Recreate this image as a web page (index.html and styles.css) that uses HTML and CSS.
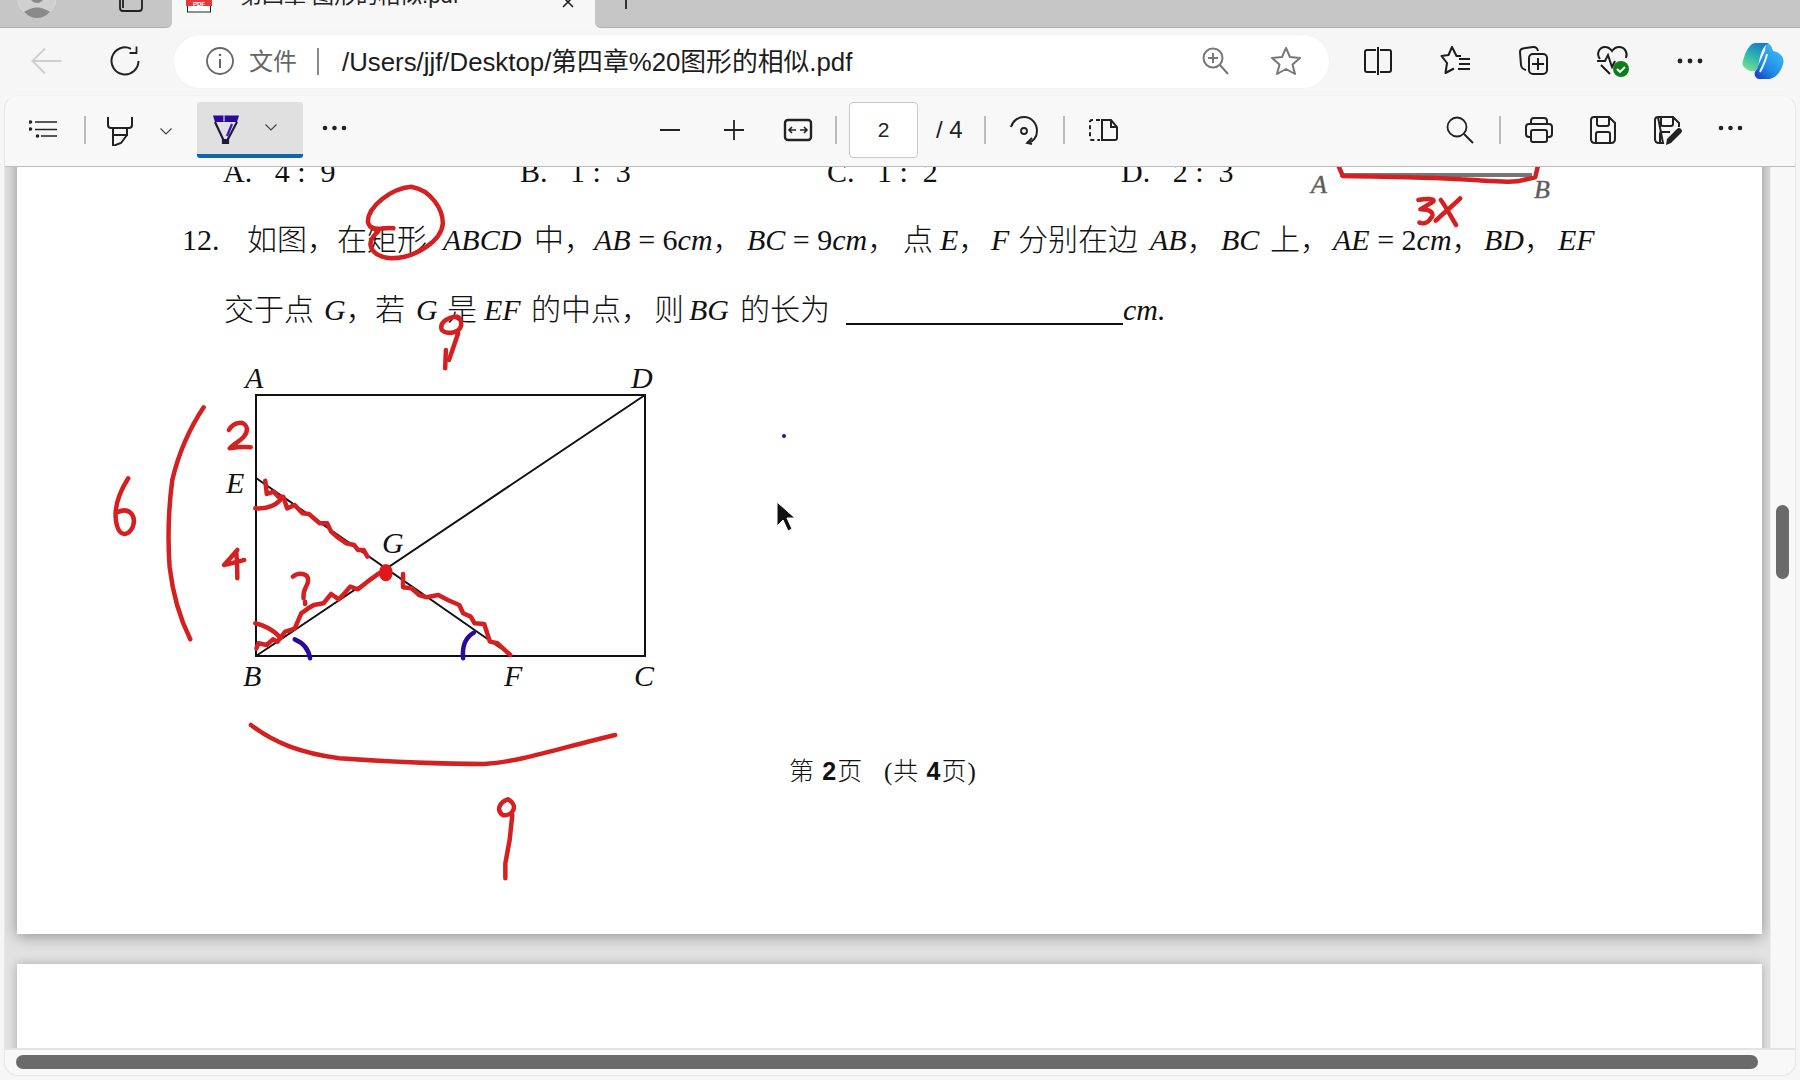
FILE: index.html
```html
<!DOCTYPE html>
<html lang="zh">
<head>
<meta charset="utf-8">
<title>第四章 图形的相似.pdf</title>
<link rel="stylesheet" href="styles.css">
</head>
<body>
<header class="tabbar">
  <div class="strip strip-left">
    <svg class="ico-avatar" width="44" height="22" viewBox="0 0 44 22"><circle cx="22" cy="-2" r="19" fill="#d0d0d0" stroke="#dcdcdc"/><circle cx="22" cy="-4" r="7" fill="#8a8a8a"/><path d="M9 12q13-9 26 0q-6 6-13 6t-13-6z" fill="#8a8a8a"/></svg>
    <svg class="ico-ws" width="24" height="12" viewBox="0 0 24 12"><path d="M1 0v8q0 3 3 3h16q3 0 3-3V0M4 0v8" fill="none" stroke="#222" stroke-width="1.8"/></svg>
  </div>
  <div class="tab">
    <svg class="ico-pdf" width="28" height="13" viewBox="0 0 28 13"><rect x="2.500" y="5" width="23" height="7" fill="#fff" stroke="#222"/><rect x="1" y="-1" width="26" height="7" fill="#e5383b"/><text x="14" y="5.600" class="pdf-mark">PDF</text></svg>
    <span class="tab-title">第四章 图形的相似.pdf</span>
    <svg class="ico-close" width="16" height="8" viewBox="0 0 16 8"><path d="M3-3L13 7M13-3L3 7" stroke="#222" stroke-width="1.6" fill="none"/></svg>
  </div>
  <div class="strip strip-right">
    <span class="new-tab"></span>
  </div>
</header>

<nav class="navbar">
  <span class="btn"><svg width="32" height="32" viewBox="0 0 32 32"><path d="M30.500 16H2M14 3.500L1.500 16L14 28.500" fill="none" stroke="#cfcfcf" stroke-width="2"/></svg></span>
  <span class="btn btn-reload"><svg width="32" height="32" viewBox="0 0 32 32"><path d="M22 3.800A13.500 13.500 0 1 0 29.500 16" fill="none" stroke="#222" stroke-width="2"/><path d="M27.500 1.500V8H20.500" fill="none" stroke="#222" stroke-width="1.800"/></svg></span>
  <div class="address">
    <svg class="ico-info" width="30" height="30" viewBox="0 0 30 30"><circle cx="15" cy="15" r="13" fill="none" stroke="#666" stroke-width="1.800"/><path d="M15 13v9" stroke="#666" stroke-width="2"/><circle cx="15" cy="9" r="1.300" fill="#666"/></svg>
    <span class="scheme">文件</span>
    <span class="addr-sep"></span>
    <span class="url">/Users/jjf/Desktop/第四章%20图形的相似.pdf</span>
    <svg class="ico-zoom" width="32" height="32" viewBox="0 0 32 32"><circle cx="14" cy="13" r="9.500" fill="none" stroke="#777" stroke-width="2"/><path d="M14 8v10M9 13h10M21 20l8 9" stroke="#777" stroke-width="2" fill="none"/></svg>
    <svg class="ico-star" width="32" height="32" viewBox="0 0 32 32"><path d="M16 3l4 9 10 1-7.500 6.500L25 29l-9-5-9 5 2.500-9.500L2 13l10-1z" fill="none" stroke="#777" stroke-width="2" stroke-linejoin="round"/></svg>
  </div>
  <div class="nav-actions">
    <span class="btn"><svg width="32" height="32" viewBox="0 0 32 32"><path d="M14 5H5q-2 0-2 2v18q0 2 2 2h9M18 5h9q2 0 2 2v18q0 2-2 2h-9" fill="none" stroke="#1c1c1c" stroke-width="2"/><path d="M16 2v28" stroke="#1c1c1c" stroke-width="2"/></svg></span>
    <span class="btn"><svg width="32" height="32" viewBox="0 0 32 32"><path d="M21 11H16.500L12 2L8.500 10L1.500 11L7 18L5.500 28L14 23.500" fill="none" stroke="#1c1c1c" stroke-width="2" stroke-linejoin="round"/><path d="M19 14h11M19 19h11M18 24h12" stroke="#1c1c1c" stroke-width="2"/></svg></span>
    <span class="btn"><svg width="32" height="32" viewBox="0 0 32 32"><path d="M8 25Q3.500 24 3 20L2 7q0-3 3-3.500L15 2q4-.5 5 4" fill="none" stroke="#1c1c1c" stroke-width="2"/><rect x="11" y="9" width="18" height="20" rx="4" fill="none" stroke="#1c1c1c" stroke-width="2"/><path d="M20 13v12M14 19h12" stroke="#1c1c1c" stroke-width="2"/></svg></span>
    <span class="btn"><svg width="36" height="36" viewBox="0 0 36 36"><path d="M6 16C2 11 5 4 11 4q4 0 7 4q3-4 7-4c6 0 9 6 7 11M3 18h8l3-6 4 12 3-6M7 22l9 9" fill="none" stroke="#1c1c1c" stroke-width="2"/><circle cx="27" cy="26" r="8" fill="#107c1e"/><path d="M23 26l3 3 5-5" fill="none" stroke="#fff" stroke-width="1.800"/></svg></span>
    <span class="btn"><svg class="dots" width="26" height="6" viewBox="0 0 26 6"><circle cx="3" cy="3" r="2.400"/><circle cx="13" cy="3" r="2.400"/><circle cx="23" cy="3" r="2.400"/></svg></span>
    <span class="btn btn-copilot"><svg width="42" height="38" viewBox="0 0 42 38"><defs><linearGradient id="cpa" x1="0.700" y1="0" x2="0.200" y2="1"><stop offset="0" stop-color="#1b78c8"/><stop offset="0.500" stop-color="#2bb8b0"/><stop offset="1" stop-color="#7fe08a"/></linearGradient><linearGradient id="cpb" x1="0.800" y1="0.200" x2="0.200" y2="1"><stop offset="0" stop-color="#35b8f2"/><stop offset="0.600" stop-color="#1f8be8"/><stop offset="1" stop-color="#1c46c8"/></linearGradient></defs><path d="M24 1C28 1 30 5 31 9C37 10 42 14 41.500 20C40 28 35 36 27 37H17C13 36 11 32 14 28L23 9Z" fill="url(#cpb)"/><path d="M13 1H27C22 3 20 8 18 15L16 25C15 30 10 30 6 28C2 26 0 23 .5 21C2 14 6 2 13 1Z" fill="url(#cpa)"/><path d="M25 12C24 18 21 24 18 30" fill="none" stroke="#e8f4fb" stroke-width="2"/></svg></span>
  </div>
</nav>

<main class="panel">
  <div class="pdf-toolbar">
    <span class="btn tb-first"><svg width="32" height="32" viewBox="0 0 32 32"><path d="M6 8H28M6 15.500H28M12 22H28" stroke="#222" stroke-width="1.500"/><circle cx="1.500" cy="8" r="1.800" fill="#222"/><circle cx="1.500" cy="15" r="1.800" fill="#222"/><circle cx="8.500" cy="22" r="1.800" fill="#222"/></svg></span>
    <span class="sep sep-list"></span>
    <span class="btn btn-hl"><svg width="32" height="32" viewBox="0 0 32 32"><path d="M4 3v8q0 3 3 3h18q3 0 3-3V3M9 14v7h14v-7M9 21v11l8-3 6-8" fill="none" stroke="#222" stroke-width="2"/></svg></span>
    <span class="chev-box"><svg class="chev" width="12" height="7" viewBox="0 0 12 7"><path d="M.5.5L6 6 11.500.5"/></svg></span>
    <span class="pen-active">
      <svg width="32" height="32" viewBox="0 0 32 32"><path d="M3 3.500H29L27 10H5z" fill="#2a0a9a"/><path d="M14 3.500v6" stroke="#fff" stroke-width="1"/><path d="M5 10L13 27V32H18V27L27 10" fill="none" stroke="#1f1a3a" stroke-width="2.200"/><path d="M13 27h5v5h-5z" fill="#1f1a3a"/><path d="M22 12L17 24" stroke="#3d14c0" stroke-width="2.200"/></svg>
      <svg class="chev chev-pen" width="12" height="7" viewBox="0 0 12 7"><path d="M.5.5L6 6 11.500.5"/></svg>
    </span>
    <span class="btn btn-more"><svg class="dots" width="26" height="6" viewBox="0 0 26 6"><circle cx="3" cy="3" r="2.300"/><circle cx="12.500" cy="3" r="2.300"/><circle cx="22" cy="3" r="2.300"/></svg></span>

    <span class="tb-group tb-zoom">
      <span class="btn"><svg width="32" height="32" viewBox="0 0 32 32"><path d="M6 16H26" stroke="#222" stroke-width="2.200"/></svg></span>
      <span class="btn"><svg width="32" height="32" viewBox="0 0 32 32"><path d="M6 16H26M16 6V26" stroke="#222" stroke-width="1.800"/></svg></span>
      <span class="btn"><svg width="32" height="32" viewBox="0 0 32 32"><rect x="3" y="6" width="26" height="20" rx="3" fill="none" stroke="#222" stroke-width="2.400"/><path d="M7 16h7M18 16h7M10 13l-3 3 3 3M22 13l3 3-3 3" fill="none" stroke="#222" stroke-width="1.600"/></svg></span>
    </span>
    <span class="sep sep-a"></span>
    <span class="page-input">2</span>
    <span class="page-total">/ 4</span>
    <span class="sep sep-b"></span>
    <span class="btn btn-rot"><svg width="32" height="32" viewBox="0 0 32 32"><path d="M3 13C5 6 11 3 16 3c8 0 13 7 13 14 0 6-4 11-9 12" fill="none" stroke="#222" stroke-width="2"/><path d="M24 24l-5 5 5 1" fill="none" stroke="#222" stroke-width="1.800"/><circle cx="16" cy="17" r="3" fill="none" stroke="#222" stroke-width="1.800"/></svg></span>
    <span class="sep sep-c"></span>
    <span class="btn btn-two"><svg width="32" height="32" viewBox="0 0 32 32"><path d="M13 6H5Q3 6 3 8V24Q3 26 5 26H13" fill="none" stroke="#222" stroke-width="2" stroke-dasharray="4 3"/><path d="M15 6H24L30 13V24Q30 26 28 26H15zM24 6V13H30" fill="none" stroke="#222" stroke-width="2"/></svg></span>

    <span class="btn btn-search"><svg width="32" height="32" viewBox="0 0 32 32"><circle cx="13" cy="13" r="9.500" fill="none" stroke="#222" stroke-width="1.800"/><path d="M20 20l9 9" stroke="#222" stroke-width="2"/></svg></span>
    <span class="sep sep-d"></span>
    <span class="tb-group tb-file">
      <span class="btn"><svg width="32" height="32" viewBox="0 0 32 32"><path d="M8 10V7q0-3 3-3h10q3 0 3 3v3M8 23H6q-3 0-3-3v-7q0-3 3-3h20q3 0 3 3v7q0 3-3 3h-2" fill="none" stroke="#222" stroke-width="2"/><rect x="8" y="16" width="16" height="12" rx="2" fill="none" stroke="#222" stroke-width="2"/></svg></span>
      <span class="btn"><svg width="32" height="32" viewBox="0 0 32 32"><path d="M7 3H22L28 9V25Q28 29 24 29H8Q4 29 4 25V6Q4 3 7 3ZM10 3V10Q10 12 12 12H20Q22 12 22 10V3M9 29V20Q9 18 11 18H21Q23 18 23 20V29" fill="none" stroke="#222" stroke-width="2"/></svg></span>
      <span class="btn"><svg width="32" height="32" viewBox="0 0 32 32"><path d="M7 3H22L28 9V13M12 29H8Q4 29 4 25V6Q4 3 7 3ZM10 3V10Q10 12 12 12H20Q22 12 22 10V3M9 29V20Q9 18 11 18H19" fill="none" stroke="#222" stroke-width="2"/><path d="M15 31l1-6L26 15q2-2 4 0t0 4L20 29z" fill="#222"/></svg></span>
      <span class="btn"><svg class="dots" width="26" height="6" viewBox="0 0 26 6"><circle cx="3" cy="3" r="2.300"/><circle cx="12.500" cy="3" r="2.300"/><circle cx="22" cy="3" r="2.300"/></svg></span>
    </span>
  </div>

  <div class="content">
    <div class="viewport">
      <article class="sheet">
        <p class="line options"><span class="opt opt-a">A.&ensp;&nbsp;4&nbsp;:&ensp;9</span><span class="opt opt-b">B.&ensp;&nbsp;1&nbsp;:&ensp;3</span><span class="opt opt-c">C.&ensp;&nbsp;1&nbsp;:&ensp;2</span><span class="opt">D.&ensp;&nbsp;2&nbsp;:&ensp;3</span></p>
        <p class="line q1"><span>12.</span><span>如图，在矩形</span><i>ABCD</i><span>中，</span><span><i>AB</i> = 6<i>cm</i>，</span><span><i>BC</i> = 9<i>cm</i>，</span><span>点</span><span><i>E</i>，</span><i>F</i><span>分别在边</span><span><i>AB</i>，</span><i>BC</i><span>上，</span><span><i>AE</i> = 2<i>cm</i>，</span><span><i>BD</i>，</span><i>EF</i></p>
        <p class="line q2"><span>交于点</span><span><i>G</i>，</span><span>若</span><i>G</i><span>是</span><i>EF</i><span>的中点，</span><span>则</span><i>BG</i><span>的长为</span><span class="blank"></span><i>cm.</i></p>
        <svg class="figure" width="450" height="340" viewBox="220 360 450 340">
          <path class="fig-line" d="M256 395H645V656H256ZM256 656L645 395M256 478L512 656"/>
          <text class="fig-label" x="245" y="388">A</text>
          <text class="fig-label" x="631" y="388">D</text>
          <text class="fig-label" x="226" y="493">E</text>
          <text class="fig-label" x="382" y="553">G</text>
          <text class="fig-label" x="243" y="686">B</text>
          <text class="fig-label" x="504" y="686">F</text>
          <text class="fig-label" x="634" y="686">C</text>
        </svg>
        <p class="foot">第 <b>2</b>页&ensp;&nbsp;(共 <b>4</b>页)</p>
        <svg class="ink" viewBox="17 137 1745 797" width="1745" height="797">
          <text class="frag-label" x="1311" y="193">A</text>
          <text class="frag-label" x="1534" y="198">B</text>
          <path d="M1340 175H1532" stroke="#777" stroke-width="4"/>
          <g transform="translate(900 150) scale(.5102 .3333)" class="red">
            <path d="M860 50L868 78C950 80 1050 82 1100 88C1150 92 1180 98 1210 94L1245 82L1250 50"/>
            <path d="M1016 150C1030 145 1050 145 1045 155L1020 178C1040 178 1050 190 1040 205C1035 220 1025 222 1018 218"/>
            <path d="M1060 150C1070 170 1080 200 1090 225M1098 145C1085 165 1065 190 1050 212"/>
          </g>
          <g transform="translate(100 160) scale(.5102 .3333)" class="red">
            <path d="M575 205C555 200 530 220 525 185C525 140 570 85 610 80C650 90 672 150 672 190C670 240 620 295 570 295C535 290 515 255 545 215"/>
            <path d="M700 470C680 470 665 490 670 510C680 525 705 520 708 495C708 480 705 472 700 470M702 520L684 600"/>
          </g>
          <g transform="translate(90 350) scale(.3827 .3333)" class="red">
            <path d="M930 0L928 55"/>
            <path d="M363 240C375 215 405 210 410 235C412 265 375 280 365 295C380 292 400 290 420 292"/>
            <path d="M100 385C75 430 60 480 70 525C78 560 100 560 112 530C122 495 100 470 72 487"/>
            <path d="M297 172Q240 270 215 390Q200 520 208 650Q220 770 262 868"/>
            <path d="M385 600C370 620 355 640 350 645C370 640 390 635 403 630M382 605C385 640 385 660 385 685"/>
            <path d="M530 680C545 665 570 670 570 690C570 710 555 715 558 745M562 755V762"/>
            <path d="M458 392L462 432L480 425L492 440L505 440L515 475L535 465L555 490L572 492L585 505L600 520L620 520L630 545L645 560L670 580L690 585L700 600L715 600L725 620"/>
            <path d="M432 475Q475 478 497 450"/>
            <path d="M818 672L818 712L840 715L860 735L880 742L910 735L935 750L965 765L975 790L995 800L1005 820L1030 822L1045 875L1065 880L1098 915"/>
            <path d="M435 895L440 880L462 885L478 868L490 875L510 845L525 840L535 835L552 790L570 775L585 765L610 760L630 732L650 748L665 730L680 710L700 718L725 695L755 670"/>
            <path d="M432 820Q470 830 495 860"/>
            <ellipse cx="773" cy="668" rx="18" ry="26" class="red-fill"/>
          </g>
          <g transform="translate(90 350) scale(.3827 .3333)" class="blue">
            <path d="M535 868Q570 885 575 925"/>
            <path d="M1003 848Q970 870 975 925"/>
          </g>
          <g transform="translate(200 690) scale(.5357 .3333)" class="red">
            <path d="M95 105C140 160 190 190 260 205C350 215 450 222 530 222C600 215 680 170 775 135"/>
            <path d="M575 328C560 335 552 360 565 375C585 380 595 345 575 328M583 375L578 450L570 520L570 565"/>
          </g>
          <circle cx="784" cy="436" r="2" fill="#2a0a9a"/>
          <path class="cursor" d="M777 502V526L783 520L788 531L792 529L787 518H795Z"/>
        </svg>
      </article>
      <div class="sheet-next"></div>
    </div>
    <div class="vscroll"><span class="vthumb"></span></div>
  </div>
  <div class="hscroll"><span class="hthumb"></span></div>
</main>
</body>
</html>
```

FILE: styles.css
```css
* { box-sizing: border-box; }
html, body { margin: 0; height: 100%; overflow: hidden; }
body { width: 1800px; height: 1080px; background: #f6f6f6; font-family: "Liberation Sans", "Noto Sans CJK SC", sans-serif; color: #222; }
svg { display: block; flex: none; }

.btn { width: 56px; height: 48px; display: flex; align-items: center; justify-content: center; flex: none; }
.dots { fill: #222; }
.chev { fill: none; stroke: #444; stroke-width: 1.2; }

/* tab strip */
.tabbar { height: 28px; display: flex; overflow: hidden; background: #f7f7f7; }
.strip { background: #c6c6c6; border-bottom: 1px solid #b0b0b0; height: 28px; position: relative; }
.strip-left { width: 172px; border-bottom-right-radius: 6px; display: flex; align-items: flex-start; padding-left: 15px; }
.ico-ws { margin-left: 60px; }
.strip-right { flex: 1; border-bottom-left-radius: 6px; padding-left: 30px; }
.new-tab { display: block; width: 2px; height: 9px; background: #333; }
.tab { width: 423px; display: flex; align-items: flex-start; padding-left: 13px; position: relative; }
.pdf-mark { font: bold 6px "Liberation Sans", sans-serif; fill: #fff; text-anchor: middle; }
.tab-title { font-size: 22px; line-height: 28px; margin: -18px 0 0 27px; white-space: nowrap; width: 320px; }
.ico-close { margin-left: 0; }

/* navigation row */
.navbar { height: 66px; display: flex; align-items: center; padding: 0 0 0 19px; }
.btn-reload { margin-left: 22px; }
.address { width: 1155px; height: 53px; margin-left: 21px; border-radius: 27px; background: #fff; display: flex; align-items: center; padding-left: 31px; box-shadow: 0 0 3px rgba(0,0,0,.03); }
.scheme { font-size: 24px; color: #666; margin: 2px 0 0 14px; line-height: 1; }
.addr-sep { width: 2px; height: 27px; background: #888; margin-left: 20px; }
.url { font-size: 25.8px; color: #1c1c1c; margin: -3px 0 0 23px; white-space: nowrap; }
.ico-zoom { margin-left: auto; }
.ico-star { margin: 0 27px 0 39px; }
.nav-actions { display: flex; align-items: center; gap: 22px; margin-left: 21px; }
.btn-copilot { margin-left: -5px; }

/* panel */
.panel { width: 1792px; height: 981px; margin: 1px 0 0 4px; background: #f8f8f8; border: 1px solid #e6e6e6; border-top-color: #f2f2f2; border-radius: 14px; overflow: hidden; }
.pdf-toolbar { height: 71px; display: flex; align-items: center; border-bottom: 1px solid #bdbdbd; padding-left: 12px; padding-bottom: 3px; }
.sep { width: 2px; height: 28px; background: #bbb; flex: none; margin-top: 1px; }
.sep-list { margin-left: 11px; }
.btn-hl { margin-left: 6px; }
.chev-box { width: 36px; display: flex; justify-content: center; margin-top: 4px; }
.pen-active { width: 106px; height: 56px; margin-left: 13px; background: #e0e0e0; border-bottom: 4px solid #0f63b0; border-radius: 3px; display: flex; align-items: center; padding: 0 0 0 13px; flex: none; }
.chev-pen { margin-left: 23px; }
.btn-more { margin-left: 4px; }
.btn-more .dots, .tb-file .dots { margin-top: -4px; }
.tb-group { display: flex; gap: 8px; flex: none; }
.tb-zoom { margin-left: 279px; }
.sep-a { margin-left: 9px; }
.page-input { width: 69px; height: 56px; margin-left: 12px; border: 1.5px solid #c8c8c8; border-radius: 4px; background: #fff; font-size: 21px; display: flex; align-items: center; justify-content: center; flex: none; }
.page-total { width: 46px; margin-left: 18px; font-size: 24px; white-space: nowrap; }
.sep-b { margin-left: 2px; }
.btn-rot { margin-left: 10px; }
.sep-c { margin-left: 11px; }
.btn-two { margin-left: 10px; }
.btn-search { margin-left: 301px; }
.sep-d { margin-left: 11px; }
.tb-file { margin-left: 10px; }

/* document area */
.content { display: flex; height: 881px; }
.viewport { width: 1765px; height: 881px; background: #e2e2e2; overflow: hidden; padding-left: 12px; flex: none; }
.sheet { width: 1745px; height: 797px; margin-top: -30px; background: #fff; position: relative; box-shadow: 0 2px 14px rgba(0,0,0,.38); font-family: "Liberation Serif", "Noto Sans CJK SC", serif; font-weight: 300; color: #111; }
.sheet-next { width: 1745px; height: 300px; margin-top: 30px; background: #fff; box-shadow: 0 0 10px rgba(0,0,0,.25); }
.line { margin: 0; height: 70px; display: flex; align-items: center; white-space: nowrap; font-size: 30px; line-height: 40px; }
.line > * { flex: none; }
.options { padding-left: 206px; }
.opt-a { width: 297px; }
.opt-b { width: 307px; }
.opt-c { width: 294px; }
.q1, .q2 { padding-bottom: 4px; }
.q1 { padding-left: 165px; }
.q1 > :nth-child(1) { width: 65px; }
.q1 > :nth-child(2) { width: 196px; }
.q1 > :nth-child(3) { width: 91px; }
.q1 > :nth-child(4) { width: 60px; }
.q1 > :nth-child(5) { width: 153px; }
.q1 > :nth-child(6) { width: 156px; }
.q1 > :nth-child(7) { width: 37px; }
.q1 > :nth-child(8) { width: 51px; }
.q1 > :nth-child(9) { width: 27px; }
.q1 > :nth-child(10) { width: 132px; }
.q1 > :nth-child(11) { width: 71px; }
.q1 > :nth-child(12) { width: 49px; }
.q1 > :nth-child(13) { width: 63px; }
.q1 > :nth-child(14) { width: 151px; }
.q1 > :nth-child(15) { width: 74px; }
.q2 { padding-left: 207px; }
.q2 > :nth-child(1) { width: 100px; }
.q2 > :nth-child(2) { width: 51px; }
.q2 > :nth-child(3) { width: 41px; }
.q2 > :nth-child(4) { width: 31px; }
.q2 > :nth-child(5) { width: 37px; }
.q2 > :nth-child(6) { width: 47px; }
.q2 > :nth-child(7) { width: 123px; }
.q2 > :nth-child(8) { width: 35px; }
.q2 > :nth-child(9) { width: 51px; }
.q2 > :nth-child(10) { width: 106px; }
.q2 > .blank { width: 277px; height: 2px; background: #111; margin-top: 28px; }
.figure { margin: 13px 0 0 203px; }
.fig-line { fill: none; stroke: #111; stroke-width: 2; }
.fig-label { font: italic 30px "Liberation Serif", serif; fill: #111; }
.foot { margin: 51px 0 0 0; padding-left: 772px; font-size: 25px; letter-spacing: 1px; line-height: 40px; white-space: nowrap; }
.foot b { font-family: "Liberation Sans", sans-serif; font-weight: 700; }
.ink { position: absolute; left: 0; top: 0; overflow: hidden; }
.ink g path { fill: none; stroke-linecap: round; stroke-linejoin: round; vector-effect: non-scaling-stroke; }
.red path { stroke: #d42020; stroke-width: 4.5; }
.red-fill { fill: #e0181c; }
.blue path { stroke: #2a0a9a; stroke-width: 4.5; }
.frag-label { font: italic 26px "Liberation Serif", serif; fill: #555; stroke: #777; stroke-width: .5; }
.cursor { fill: #111; stroke: #fff; stroke-width: 1; }

/* scrollbars */
.vscroll { flex: 1; border-left: 1px solid #ececec; position: relative; }
.vthumb { position: absolute; left: 5px; top: 338px; width: 13px; height: 74px; border-radius: 7px; background: #6a6a6a; }
.hscroll { height: 26px; border-top: 2px solid #e4e4e4; position: relative; }
.hthumb { position: absolute; left: 11px; top: 5px; width: 1742px; height: 14px; border-radius: 7px; background: #6a6a6a; }
```
